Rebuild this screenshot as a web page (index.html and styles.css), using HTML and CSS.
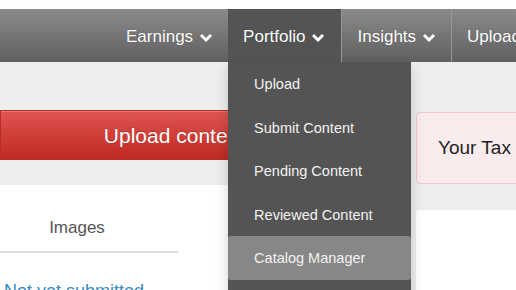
FILE: index.html
```html
<!DOCTYPE html>
<html lang="en">
<head>
<meta charset="UTF-8">
<meta name="viewport" content="width=device-width, initial-scale=1.0">
<title>Portfolio</title>
<link rel="stylesheet" href="styles.css">
</head>
<body>

<div class="topstrip"></div>

<nav class="navbar">
  <ul class="nav">
    <li class="nav-item">
      <a href="#">Earnings <svg class="chev" viewBox="0 0 14 10"><polyline points="2,2 7,7 12,2"/></svg></a>
    </li>
    <li class="nav-item open">
      <a href="#">Portfolio <svg class="chev" viewBox="0 0 14 10"><polyline points="2,2 7,7 12,2"/></svg></a>
      <ul class="dropdown">
        <li><a href="#">Upload</a></li>
        <li><a href="#">Submit Content</a></li>
        <li><a href="#">Pending Content</a></li>
        <li><a href="#">Reviewed Content</a></li>
        <li class="hover"><a href="#">Catalog Manager</a></li>
      </ul>
    </li>
    <li class="nav-item sep">
      <a href="#">Insights <svg class="chev" viewBox="0 0 14 10"><polyline points="2,2 7,7 12,2"/></svg></a>
    </li>
    <li class="nav-item sep">
      <a href="#">Upload</a>
    </li>
  </ul>
</nav>

<div class="page">
  <div class="main-col">
    <a class="btn-upload" href="#">Upload content</a>
    <div class="panel">
      <div class="tabs">
        <div class="tab">Images</div>
      </div>
      <p class="status">Not yet submitted</p>
    </div>
  </div>
  <div class="side-col">
    <div class="alert">Your Tax Information</div>
    <div class="card"></div>
  </div>
</div>

</body>
</html>
```

FILE: styles.css
```css
body {
  margin: 0;
  font-family: "Liberation Sans", Arial, sans-serif;
  background: #eeeeee;
  overflow: hidden;
}

a {
  text-decoration: none;
  color: inherit;
}

.topstrip {
  height: 9px;
  background: #fff;
}

/* top navigation */
.navbar {
  height: 53px;
  background: linear-gradient(#8b8b8b, #5f5f5f);
  position: relative;
  z-index: 2;
}

.nav {
  list-style: none;
  margin: 0;
  padding: 0 0 0 111px;
  display: flex;
  height: 100%;
  white-space: nowrap;
}

.nav-item {
  position: relative;
  height: 100%;
}

.nav-item > a {
  display: flex;
  align-items: center;
  height: 100%;
  box-sizing: border-box;
  padding: 3px 15px 0;
  font-size: 17px;
  color: #fff;
  text-shadow: 0 0 1px rgba(0, 0, 0, 0.3);
}

.nav-item.sep {
  border-left: 1px solid #979797;
}

.nav-item.open {
  background: #545454;
}

.nav-item.open > a {
  padding-right: 16px;
}

.chev {
  width: 14px;
  height: 10px;
  margin-left: 6px;
  margin-top: 1px;
}

.chev polyline {
  fill: none;
  stroke: #fff;
  stroke-width: 3;
}

.dropdown {
  position: absolute;
  top: 100%;
  left: 0;
  width: 183px;
  margin: 0;
  padding: 0 0 30px;
  list-style: none;
  background: #545454;
  box-shadow: 0 6px 12px rgba(0, 0, 0, 0.18);
}

.dropdown li a {
  display: block;
  height: 43.5px;
  line-height: 44px;
  padding-left: 26px;
  font-size: 14.5px;
  color: #f2f2f2;
}

.dropdown li.hover a {
  background: #878787;
  border-radius: 3px;
}

/* page body */
.page {
  display: flex;
  gap: 67px;
}

.main-col {
  width: 349px;
  flex-shrink: 0;
  padding-top: 48px;
}

.btn-upload {
  display: block;
  height: 48px;
  line-height: 50px;
  text-align: center;
  font-size: 21px;
  color: #fff;
  text-shadow: 0 -1px 0 rgba(0, 0, 0, 0.2);
  background: linear-gradient(#e05550, #bf2823);
  border: 1px solid #b92c28;
  box-shadow: inset 0 1px 0 rgba(255, 255, 255, 0.2);
}

.panel {
  margin-top: 25px;
  background: #fff;
  padding-top: 20px;
  height: 200px;
}

.tabs {
  width: 178px;
  border-bottom: 2px solid #dddddd;
}

.tab {
  width: 154px;
  height: 46px;
  line-height: 46px;
  text-align: center;
  font-size: 17px;
  color: #555;
}

.status {
  margin: 28px 0 0 4px;
  font-size: 18px;
  line-height: 20px;
  color: #3a8cc0;
}

.side-col {
  flex: 1;
  padding-top: 50px;
  white-space: nowrap;
}

.alert {
  height: 70px;
  line-height: 70px;
  padding-left: 21px;
  font-size: 19px;
  color: #222;
  background: #faecec;
  border: 1px solid #efcaca;
  border-radius: 4px;
}

.card {
  margin-top: 26px;
  height: 120px;
  background: #fff;
  border-radius: 3px 0 0 0;
}
```
